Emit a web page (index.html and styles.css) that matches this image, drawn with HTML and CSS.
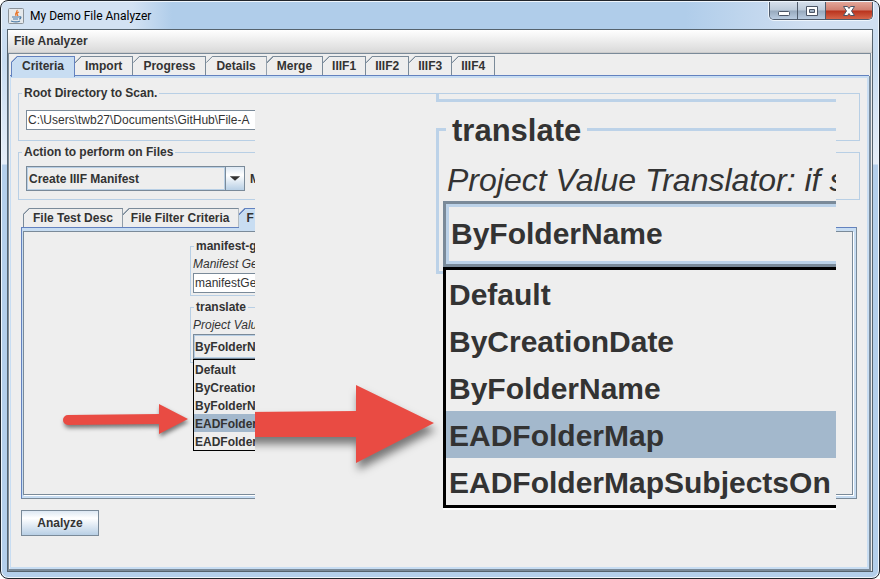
FILE: index.html
```html
<!DOCTYPE html>
<html lang="en">
<head>
<meta charset="utf-8">
<title>My Demo File Analyzer</title>
<link rel="stylesheet" href="styles.css">
</head>
<body>
<div class="window">
  <header class="titlebar">
    <svg class="app-icon" viewBox="0 0 16 16" aria-hidden="true">
      <rect x=".5" y=".5" width="15" height="15" rx="1" fill="#e6e9ec" stroke="#8b9299"/>
      <path d="M9 2c1 2-3 3-1 6M11 4c-3 1-2 2-1 4" fill="none" stroke="#e8762c" stroke-width="1.3"/>
      <path d="M4 9h7M5 11h5M3 13c3 1 7 1 9 0M11 9c3-1 2 2 0 2" fill="none" stroke="#4c7aa5" stroke-width="1.2"/>
    </svg>
    <h1 class="title">My Demo File Analyzer</h1>
    <div class="win-buttons">
      <button class="win-btn" aria-label="Minimize"><svg viewBox="0 0 12 12"><rect x=".5" y="6.500" width="11" height="4" rx="1" fill="#fff" stroke="#4b5566"/></svg></button>
      <button class="win-btn" aria-label="Maximize"><svg viewBox="0 0 12 12"><path d="M.5 1.500h11v9H.5zM3.500 4.500v3h5v-3z" fill="#fff" fill-rule="evenodd" stroke="#4b5566"/></svg></button>
      <button class="win-btn close" aria-label="Close"><svg viewBox="0 0 12 12"><path d="M.5 1.500h4L6 3.500l1.500-2h4L8.500 6l3 4.500h-4L6 8.500l-1.500 2h-4L3.500 6z" fill="#fff" stroke="#4b5566"/></svg></button>
    </div>
  </header>
  <div class="client">
    <nav class="menubar"><button class="menu">File Analyzer</button></nav>
    <main class="scroller">
      <div class="tabs" role="tablist">
        <button class="tab selected" role="tab">Criteria</button>
        <button class="tab" role="tab">Import</button>
        <button class="tab" role="tab">Progress</button>
        <button class="tab" role="tab">Details</button>
        <button class="tab" role="tab">Merge</button>
        <button class="tab medium" role="tab">IIIF1</button>
        <button class="tab medium" role="tab">IIIF2</button>
        <button class="tab medium" role="tab">IIIF3</button>
        <button class="tab medium" role="tab">IIIF4</button>
      </div>
      <div class="pane">
        <fieldset class="group root-group">
          <legend><label for="root">Root Directory to Scan.</label></legend>
          <input class="field" id="root" type="text" value="C:\Users\twb27\Documents\GitHub\File-A">
        </fieldset>
        <fieldset class="group action-group">
          <legend><label for="action">Action to perform on Files</label></legend>
          <div class="action-row">
            <span class="combo">
              <select id="action"><option>Create IIIF Manifest</option></select>
              <svg class="combo-arrow" viewBox="0 0 19 23" aria-hidden="true"><path d="M4 9h11l-5.500 5z" fill="#333"/></svg>
            </span>
            <span>M</span>
          </div>
        </fieldset>
        <div class="tabs inner-tabs" role="tablist">
          <button class="tab medium" role="tab">File Test Desc</button>
          <button class="tab narrow" role="tab">File Filter Criteria</button>
          <button class="tab selected narrow" role="tab">F</button>
        </div>
        <div class="inner-pane">
          <div class="inner-scroller">
            <div class="form">
              <fieldset class="group">
                <legend><label for="gen">manifest-g</label></legend>
                <p class="hint">Manifest Ge</p>
                <input class="field" id="gen" type="text" value="manifestGe">
              </fieldset>
              <fieldset class="group translate-group">
                <legend><label for="translate">translate</label></legend>
                <p class="hint">Project Valu</p>
                <select class="value" id="translate"><option>ByFolderName</option></select>
                <ul class="options" role="listbox">
                  <li role="option">Default</li>
                  <li role="option">ByCreationDate</li>
                  <li role="option">ByFolderName</li>
                  <li class="active" role="option">EADFolderMap</li>
                  <li role="option">EADFolderMap</li>
                </ul>
              </fieldset>
            </div>
            <svg class="arrow" viewBox="0 0 128 32" aria-hidden="true"><path d="M6 11L97 10V0l29 15-29 15V20L6 21a5 5 0 0 1 0-10z" fill="#e94b43"/></svg>
          </div>
        </div>
        <button class="analyze">Analyze</button>
      </div>
    </main>
  </div>
  <section class="magnifier">
    <div class="big-edge"></div>
    <fieldset class="big-group">
      <legend><label for="big-translate">translate</label></legend>
      <p class="hint">Project Value Translator: if s</p>
      <select class="value" id="big-translate"><option>ByFolderName</option></select>
      <ul class="options" role="listbox">
        <li role="option">Default</li>
        <li role="option">ByCreationDate</li>
        <li role="option">ByFolderName</li>
        <li class="active" role="option">EADFolderMap</li>
        <li role="option">EADFolderMapSubjectsOn</li>
      </ul>
    </fieldset>
    <svg class="big-arrow" viewBox="0 0 180 80" aria-hidden="true"><path d="M-10 27L101 26V0l78 38-78 40V52H-10z" fill="#e94b43"/></svg>
  </section>
</div>
</body>
</html>
```
FILE: styles.css
```css
* { box-sizing: border-box; }

body {
  margin: 0;
  background: #fff;
  color: #333;
  font: bold 12px/14px "Liberation Sans", Arial, sans-serif;
}

button, input, select {
  margin: 0;
  padding: 0;
  color: inherit;
  font: inherit;
  border-radius: 0;
}

select { appearance: none; }

fieldset { min-width: 0; margin: 0; padding: 0; }

.window {
  position: relative;
  display: flex;
  flex-direction: column;
  min-height: 100vh;
  padding: 0 6px 6px;
  border: 1px solid #20252c;
  border-radius: 8px;
  background: linear-gradient(#cfdff1 0, #c8dcf1 60px, #e6eef8 163px, #b4cfeb 164px);
  box-shadow: inset 0 0 0 1px #eef5fc;
  overflow: hidden;
}

.titlebar {
  display: flex;
  align-items: center;
  height: 27px;
  margin: 1px -5px 0;
  padding-left: 6px;
  background: linear-gradient(90deg, #d3e2f3 0, #d3e2f3 130px, #b0cdea 170px, #b0cdea 78%, #d0dff1 92%);
}

.app-icon { width: 16px; height: 16px; }

.title {
  flex: 1;
  margin: 0 0 0 6px;
  color: #000;
  font: 12px/16px Roboto, "Open Sans", sans-serif;
}

.win-buttons {
  display: flex;
  align-self: flex-start;
  margin-right: 5px;
  border: 1px solid #4f5b6b;
  border-top: 0;
  border-radius: 0 0 5px 5px;
  box-shadow: 0 0 0 1px #eef5fc;
  overflow: hidden;
}

.win-btn {
  display: grid;
  place-items: center;
  width: 28px;
  height: 17px;
  border: 0;
  border-right: 1px solid #4f5b6b;
  background: linear-gradient(#d5dfeb 0, #bccada 48%, #97a9bd 52%, #b9cbe0);
}

.win-btn svg { width: 12px; height: 12px; }

.win-btn.close {
  width: 46px;
  border-right: 0;
  background: linear-gradient(#e3a699 0, #d07f70 48%, #b9321c 52%, #d5654a);
}

.client {
  flex: 1;
  display: flex;
  flex-direction: column;
  border: 1px solid #56636e;
  background: #eee;
}

.menubar {
  height: 23px;
  border-bottom: 1px solid #ccc;
  background: linear-gradient(#fff, #dadada);
}

.menu {
  height: 22px;
  padding: 0 6px;
  border: 0;
  background: none;
}

.scroller {
  flex: 1;
  display: flex;
  flex-direction: column;
  margin-right: 1px;
  padding: 2px 1px 0 1px;
  border: 1px solid #7a8a99;
  border-bottom-width: 2px;
}

.tabs {
  display: flex;
  height: 20px;
  padding-left: 1px;
}

.tab {
  height: 19px;
  padding: 0 10px;
  border: 1px solid #7a8a99;
  border-width: 1px 1px 0 0;
  background: linear-gradient(135deg, #7a8a99 5px, #eee 5px) border-box;
  clip-path: polygon(6px 0, 100% 0, 100% 100%, 0 100%, 0 6px);
}

.tab:first-child { border-left-width: 1px; }
.tab.medium { padding: 0 9px; }
.tab.narrow { padding: 0 8px; }

.tab.selected {
  position: relative;
  height: 21px;
  padding-bottom: 2px;
  border-color: #6382bf;
  background: linear-gradient(135deg, #6382bf 5px, #c8ddf2 5px) border-box;
}

.pane {
  flex: 1;
  display: flex;
  flex-direction: column;
  align-items: stretch;
  padding: 8px 7px 10px;
  border: 2px solid #c8ddf2;
  border-left-width: 1px;
  box-shadow: 0 -1px 0 #6382bf, 1px 0 0 #7a8a99;
}

.group { border: 1px solid #b8cfe5; }

.group legend {
  margin-left: 1px;
  padding: 0 2px;
}

.root-group { height: 55px; padding: 10px 7px; }
.action-group { height: 55px; margin-top: 4px; padding: 7px; }

.root-group legend, .action-group legend { margin-left: -4px; }

.action-row { display: flex; align-items: center; gap: 5px; }

.field {
  display: block;
  width: 100%;
  height: 20px;
  padding: 0 1px;
  border: 1px solid #7a8a99;
  background: #fff;
  font-weight: normal;
}

.root-group .field { width: 60%; }

.combo {
  display: flex;
  width: 219px;
  height: 25px;
  border: 1px solid #7a8a99;
}

.combo select {
  flex: 1;
  padding-left: 1px;
  border: 1px solid #b8cfe5;
  background: #eee;
}

.combo-arrow {
  width: 19px;
  height: 23px;
  border-left: 1px solid #7a8a99;
  background: linear-gradient(#dde8f3, #fff 35%, #b8cfe5);
}

.inner-tabs { height: 19px; margin-top: 8px; padding-left: 5px; }

.inner-pane {
  flex: 1;
  display: flex;
  margin: 0 3px;
  border: 1px solid #6382bf;
  border-right-color: #7a8a99;
  border-bottom-color: #7a8a99;
  background: #c8ddf2;
  padding: 3px 3px 3px 1px;
}

.inner-scroller {
  position: relative;
  flex: 1;
  padding: 7px 0 0 166px;
  border: 1px solid #7a8a99;
  background: #eee;
  box-shadow: 1px 1px 0 #fff;
}

.form { display: flex; flex-direction: column; gap: 4px; width: 480px; }
.form .group { height: 57px; padding: 4px 2px; }
.form .translate-group { position: relative; height: 63px; }

.hint {
  margin: 0;
  font-style: italic;
  font-weight: normal;
  white-space: nowrap;
}

.form .hint { margin-bottom: 2px; line-height: 14px; }

.form .value {
  display: block;
  width: 100%;
  height: 25px;
  padding-left: 1px;
  border: 1px solid #7a8a99;
  box-shadow: inset 0 0 0 1px #b8cfe5;
  background: #eee;
}

.options {
  margin: 0;
  padding: 0;
  border: 1px solid #000;
  background: #eee;
  list-style: none;
}

.form .options { position: absolute; left: 2px; right: 2px; top: 45px; z-index: 1; }
.options li { height: 18px; padding-left: 1px; line-height: 20px; }
.options .active { background: #a3b8cc; }

.arrow {
  position: absolute;
  left: 38px;
  top: 172px;
  z-index: 2;
  width: 128px;
  height: 32px;
  overflow: visible;
  filter: drop-shadow(1px 3px 2px rgba(0, 0, 0, .5));
}

.analyze {
  width: 78px;
  height: 26px;
  margin: 11px 0 21px 3px;
  border: 1px solid #7a8a99;
  background: linear-gradient(#dde8f3, #fff 30%, #b8cfe5);
}

.magnifier {
  position: absolute;
  left: 254px;
  right: 43px;
  top: 93px;
  z-index: 5;
  height: 418px;
  padding-left: 181px;
  background: #eee;
  font-size: 30px;
  line-height: 36px;
  overflow: hidden;
}

.big-edge {
  height: 8px;
  border: 3px solid #bcd2e8;
  border-width: 0 0 3px 3px;
}

.big-group {
  position: relative;
  height: 165px;
  margin-top: 7px;
  padding: 13px 0 0 4px;
  border: 3px solid #bcd2e8;
  border-right: 0;
}

.big-group legend { margin-left: 3px; padding: 4px 6px 0; font-size: 31px; }
.big-group .hint { margin: 0 0 3px 4px; font-size: 32px; }

.big-group .value {
  display: block;
  width: 100%;
  height: 66px;
  padding-left: 5px;
  border: 3px solid #7a8a99;
  border-right: 0;
  background: #eee;
  box-shadow: inset 0 3px 0 #bcd2e8, inset 3px -3px 0 #bcd2e8;
}

.big-group .options {
  position: absolute;
  left: 4px;
  right: 0;
  top: 118px;
  border-width: 3px;
  border-right: 0;
  box-shadow: 0 2px 0 #fff;
}

.big-group .options li { height: 47px; padding-left: 3px; line-height: 49px; }

.big-arrow {
  position: absolute;
  left: 0;
  top: 291px;
  width: 180px;
  height: 80px;
  overflow: visible;
  filter: drop-shadow(2px 7px 4px rgba(0, 0, 0, .5));
}
```
